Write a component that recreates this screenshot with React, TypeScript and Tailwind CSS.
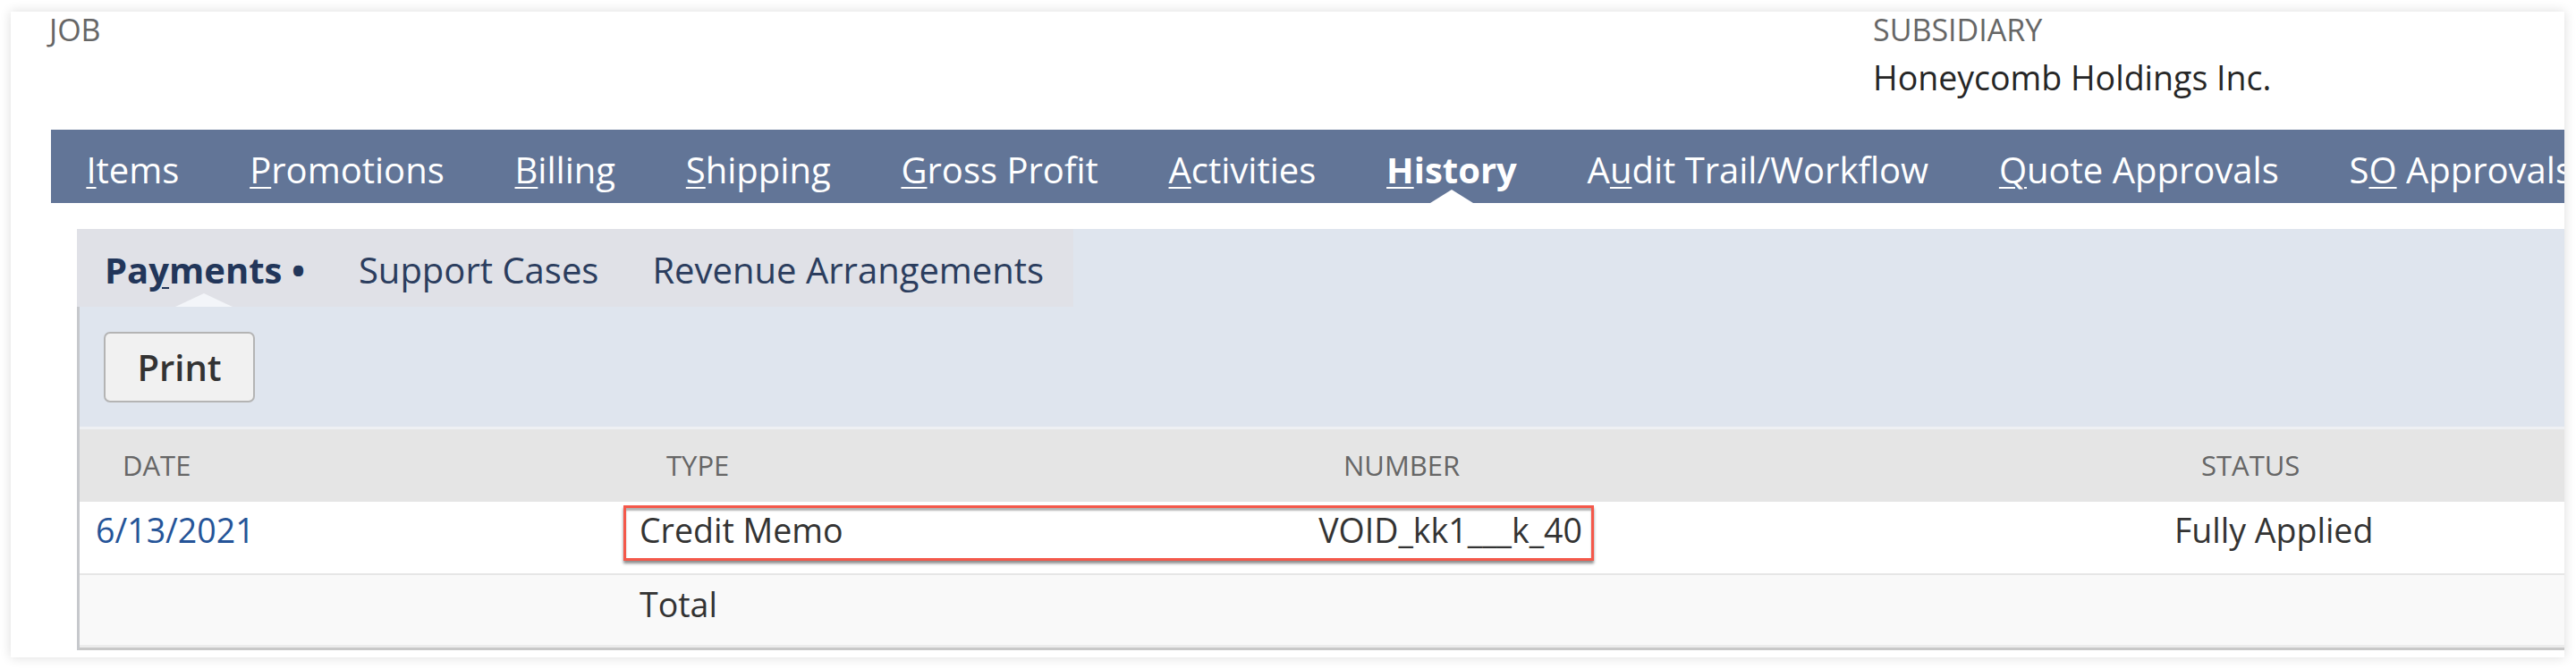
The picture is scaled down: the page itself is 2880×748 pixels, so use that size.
const mainTabs = [
  { pre: "", key: "I", post: "tems" },
  { pre: "", key: "P", post: "romotions" },
  { pre: "", key: "B", post: "illing" },
  { pre: "", key: "S", post: "hipping" },
  { pre: "", key: "G", post: "ross Profit" },
  { pre: "", key: "A", post: "ctivities" },
  { pre: "", key: "H", post: "istory", active: true },
  { pre: "A", key: "u", post: "dit Trail/Workflow" },
  { pre: "", key: "Q", post: "uote Approvals" },
  { pre: "S", key: "O", post: " Approvals" },
];

function MainTab(props: { pre: string; k: string; post: string; active?: boolean }) {
  return (
    <div
      className={
        "relative h-full shrink-0 px-[39.4px] pt-[25px] text-[40px] leading-none text-white " +
        (props.active ? "font-bold" : "font-normal")
      }
    >
      {props.pre}
      <span className="underline decoration-2 underline-offset-[4px]">{props.k}</span>
      {props.post}
      {props.active && (
        <div className="absolute bottom-0 left-1/2 h-0 w-0 -translate-x-1/2 border-x-[24px] border-b-[15px] border-x-transparent border-b-white" />
      )}
    </div>
  );
}

export default function App() {
  return (
    <div className="h-[748px] w-[2880px] overflow-hidden bg-white pl-[12px] pr-[13px] pt-[13px] font-['Open_Sans',sans-serif]">
      <div className="h-[722px] overflow-hidden bg-white shadow-[0_0_12px_rgba(0,0,0,0.14)]">
        {/* header fields */}
        <div className="flex h-[132px] pl-[43px]">
          <div className="w-[2039px] text-[34px] leading-[1.2] text-[#666]">JOB</div>
          <div>
            <div className="text-[34px] leading-[1.2] text-[#666]">SUBSIDIARY</div>
            <div className="mt-[12px] text-[37.5px] leading-[1.1] text-[#262626]">Honeycomb Holdings Inc.</div>
          </div>
        </div>

        {/* main tabs */}
        <div className="ml-[45px] flex h-[82px] whitespace-nowrap bg-[#627597]">
          {mainTabs.map((t) => (
            <MainTab key={t.pre + t.key + t.post} pre={t.pre} k={t.key} post={t.post} active={t.active} />
          ))}
        </div>

        <div className="ml-[74px] mt-[29px]">
          {/* sub tabs */}
          <div className="flex h-[87px] bg-[#dfe5ee]">
            <div className="flex whitespace-nowrap bg-[#e0e1e7] text-[40px] leading-none">
              <div className="relative pl-[31px] pr-[30px] pt-[26px] font-bold text-[#22365a]">
                Pa<span className="underline decoration-2 underline-offset-[4px]">y</span>ments •
                <div className="absolute bottom-0 left-[110px] h-0 w-0 border-x-[32px] border-b-[15px] border-x-transparent border-b-[#f3f5f9]" />
              </div>
              <div className="px-[30px] pt-[26px] text-[#2b3d5e]">Support Cases</div>
              <div className="pl-[30px] pr-[33px] pt-[26px] text-[#2b3d5e]">Revenue Arrangements</div>
            </div>
          </div>

          <div className="border-l-[3px] border-[#c6c8cc] bg-[#dfe5ee]">
            <div className="pb-[27px] pl-[27px] pt-[28px]">
              <button className="flex h-[79px] w-[169px] items-center justify-center rounded-[7px] border-2 border-[#b4b4b4] bg-[#f1f1f1] text-[40px] font-semibold leading-none text-[#333]">
                Print
              </button>
            </div>

            {/* table */}
            <div className="border-t-[3px] border-[#eef0f3] bg-white">
              <div className="grid h-[81px] grid-cols-[608px_757px_328px_631px_1fr] bg-[#e5e5e5] text-[31px] uppercase leading-none text-[#666]">
                <div className="pl-[48px] pt-[25px]">Date</div>
                <div className="pl-[48px] pt-[25px]">Type</div>
                <div className="pl-[48px] pt-[25px]">Number</div>
                <div />
                <div className="pl-[48px] pt-[25px]">Status</div>
              </div>

              <div className="relative grid h-[82px] grid-cols-[608px_757px_328px_631px_1fr] border-b-2 border-[#e6e6e6] bg-white text-[37.5px] leading-none text-[#333]">
                <div className="pl-[18px] pt-[13px] text-[#255498]">6/13/2021</div>
                <div className="pl-[18px] pt-[13px]">Credit Memo</div>
                <div className="pr-[13px] pt-[13px] text-right">VOID_kk1___k_40</div>
                <div />
                <div className="pl-[18px] pt-[13px]">Fully Applied</div>
                <div className="absolute left-[608px] top-[4px] h-[62px] w-[1085px] border-[3px] border-[#f4584a] shadow-[0_3px_3px_rgba(0,0,0,0.45),inset_0_3px_2px_rgba(0,0,0,0.3)]" />
              </div>

              <div className="grid h-[81px] grid-cols-[608px_757px_328px_631px_1fr] border-b-[3px] border-[#ececec] bg-[#f9f9f9] text-[37.5px] leading-none text-[#333]">
                <div />
                <div className="pl-[18px] pt-[14px]">Total</div>
              </div>
              <div className="h-[3px] bg-[#c8c8c8]" />
            </div>
          </div>
        </div>
      </div>
    </div>
  );
}
